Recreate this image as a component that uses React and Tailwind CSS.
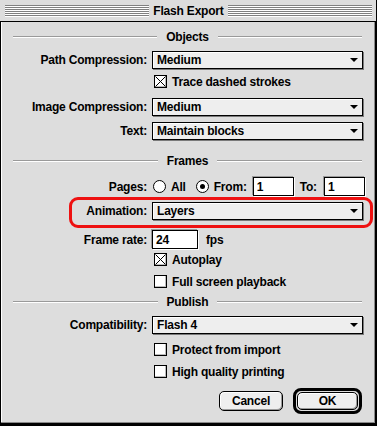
import React from 'react';

const FONT = "font-['Liberation_Sans',Arial,sans-serif]";

function Stripes() {
  return (
    <div className="flex-1 h-[12px] bg-[repeating-linear-gradient(to_bottom,#808080_0px,#808080_1px,#ffffff_1px,#ffffff_2px)]" />
  );
}

function SectionHeader({ title, className = '' }) {
  return (
    <div className={`ml-[12px] w-[349px] h-[16px] flex items-center ${className}`}>
      <div className="flex-1 h-[2px] border-t border-t-[#9a9a9a] border-b border-b-white" />
      <span className="px-[9px] leading-none">{title}</span>
      <div className="flex-1 h-[2px] border-t border-t-[#9a9a9a] border-b border-b-white" />
    </div>
  );
}

function Popup({ value, className = '' }) {
  return (
    <div
      className={`h-[18px] w-[211px] border border-black bg-[#eeeeee] shadow-[inset_1px_1px_0_#ffffff,1px_1px_0_#7a7a7a] flex items-center justify-between pl-[4px] pr-[4px] ${className}`}
    >
      <span className="leading-none">{value}</span>
      <svg width="8" height="4" viewBox="0 0 8 4">
        <path d="M0 0H8L4 4Z" fill="#000" />
      </svg>
    </div>
  );
}

function Label({ children }) {
  return <div className="w-[146px] text-right leading-none pr-0">{children}</div>;
}

function Checkbox({ checked }) {
  return (
    <div className="w-[13px] h-[13px] border border-black bg-white shadow-[inset_-1px_-1px_0_#bbbbbb] shrink-0">
      {checked && (
        <svg width="11" height="11" viewBox="0 0 11 11" className="block">
          <path d="M0.5 0.5L10.5 10.5M10.5 0.5L0.5 10.5" stroke="#000" strokeWidth="1" />
        </svg>
      )}
    </div>
  );
}

function Radio({ checked }) {
  return (
    <div className="w-[13px] h-[13px] rounded-full border border-black bg-white flex items-center justify-center shrink-0">
      {checked && <div className="w-[5px] h-[5px] rounded-full bg-black" />}
    </div>
  );
}

function Field({ value, className = '' }) {
  return (
    <div
      className={`h-[19px] border border-black bg-white shadow-[-1px_-1px_0_#9a9a9a,1px_1px_0_#ffffff] flex items-center pl-[3px] leading-none ${className}`}
    >
      {value}
    </div>
  );
}

function CheckRow({ label, checked, className = '' }) {
  return (
    <div className={`h-[13px] flex items-center ml-[153px] ${className}`}>
      <Checkbox checked={checked} />
      <span className="ml-[5px] leading-none">{label}</span>
    </div>
  );
}

export default function App() {
  return (
    <div className={`w-[377px] h-[426px] bg-[#dddddd] flex flex-col text-[12px] font-bold text-black tracking-[-0.2px] ${FONT}`}>
      {/* Title bar */}
      <div className="h-[22px] shrink-0 border-b border-black border-r border-r-black flex items-center pl-[5px] pr-[4px] pt-[1px]">
        <Stripes />
        <span className="px-[4px] leading-none">Flash Export</span>
        <Stripes />
      </div>

      {/* Body */}
      <div className="flex-1 flex flex-col border-l border-l-black border-r-2 border-r-black border-b-[3px] border-b-black shadow-[inset_-1px_-1px_0_#8a8a8a,inset_1px_0_0_#ffffff]">
        <SectionHeader title="Objects" className="mt-[7px]" />

        <div className="h-[18px] mt-[6px] flex items-center gap-[5px]">
          <Label>Path Compression:</Label>
          <Popup value="Medium" />
        </div>

        <CheckRow label="Trace dashed strokes" checked className="mt-[6px]" />

        <div className="h-[18px] mt-[10px] flex items-center gap-[5px]">
          <Label>Image Compression:</Label>
          <Popup value="Medium" />
        </div>

        <div className="h-[18px] mt-[6px] flex items-center gap-[5px]">
          <Label>Text:</Label>
          <Popup value="Maintain blocks" />
        </div>

        <SectionHeader title="Frames" className="mt-[13px]" />

        <div className="h-[19px] mt-[8px] flex items-center">
          <Label>Pages:</Label>
          <div className="ml-[6px]"><Radio /></div>
          <span className="ml-[5px] leading-none">All</span>
          <div className="ml-[10px]"><Radio checked /></div>
          <span className="ml-[5px] leading-none">From:</span>
          <Field value="1" className="ml-[6px] w-[41px]" />
          <span className="ml-[6px] leading-none">To:</span>
          <Field value="1" className="ml-[7px] w-[41px]" />
        </div>

        <div className="relative h-[18px] mt-[6px] flex items-center gap-[5px]">
          <Label>Animation:</Label>
          <Popup value="Layers" />
          <div className="absolute left-[68px] top-[-5px] w-[304px] h-[31px] border-[3px] border-[#ee1111] rounded-[9px]" />
        </div>

        <div className="h-[19px] mt-[10px] flex items-center">
          <Label>Frame rate:</Label>
          <Field value="24" className="ml-[5px] w-[46px]" />
          <span className="ml-[8px] leading-none">fps</span>
        </div>

        <CheckRow label="Autoplay" checked className="mt-[4px]" />
        <CheckRow label="Full screen playback" className="mt-[9px]" />

        <SectionHeader title="Publish" className="mt-[6px]" />

        <div className="h-[18px] mt-[6px] flex items-center gap-[5px]">
          <Label>Compatibility:</Label>
          <Popup value="Flash 4" />
        </div>

        <CheckRow label="Protect from import" className="mt-[9px]" />
        <CheckRow label="High quality printing" className="mt-[9px]" />

        <div className="h-[26px] mt-[10px] flex items-center justify-end pr-[13px]">
          <div className="w-[64px] h-[20px] border border-black rounded-[5px] bg-[#eeeeee] shadow-[inset_-1px_-1px_0_#9a9a9a,inset_1px_1px_0_#ffffff] flex items-center justify-center leading-none">
            Cancel
          </div>
          <div className="ml-[10px] w-[69px] h-[26px] border-[3px] border-black rounded-[8px] p-[1px] flex">
            <div className="flex-1 border border-black rounded-[5px] bg-[#eeeeee] shadow-[inset_-1px_-1px_0_#9a9a9a,inset_1px_1px_0_#ffffff] flex items-center justify-center leading-none">
              OK
            </div>
          </div>
        </div>
      </div>
    </div>
  );
}
